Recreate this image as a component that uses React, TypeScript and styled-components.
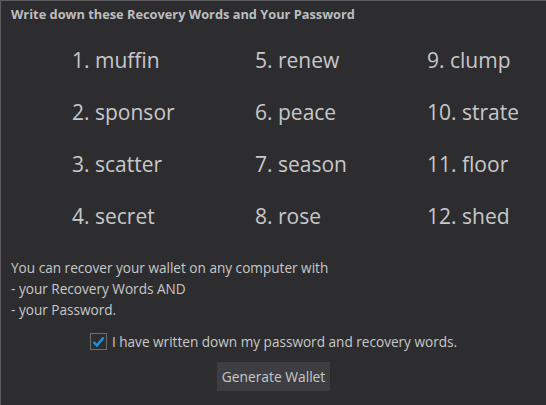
import React from "react";
import styled, { createGlobalStyle } from "styled-components";

const Global = createGlobalStyle`
  html, body {
    margin: 0;
    padding: 0;
    background: #2d2d30;
  }
`;

const Dialog = styled.div`
  box-sizing: border-box;
  width: 546px;
  height: 405px;
  overflow: hidden;
  background: #2d2d30;
  border-top: 1px solid #5c5c5f;
  border-left: 1px solid #5c5c5f;
  font-family: "Open Sans", "DejaVu Sans", sans-serif;
  color: #c8c8c8;
  padding: 3px 10px 0;
`;

const Title = styled.div`
  font-size: 12.8px;
  font-weight: 700;
  line-height: 20px;
  color: #bdbdbd;
`;

const Words = styled.div`
  display: grid;
  grid-template-columns: 183px 172px 91px;
  grid-auto-rows: 52px;
  margin: 10px 0 0 61px;
`;

const Word = styled.div`
  font-size: 21px;
  line-height: 52px;
  white-space: nowrap;
  overflow: hidden;
  color: #c8c8c8;
`;

const Info = styled.p`
  margin: 15px 0 0;
  font-size: 13.6px;
  line-height: 21px;
`;

const CheckRow = styled.label`
  display: flex;
  align-items: center;
  justify-content: center;
  gap: 5px;
  margin-top: 11px;
  height: 20px;
  font-size: 13.6px;
`;

const Box = styled.span`
  box-sizing: border-box;
  width: 17px;
  height: 17px;
  border: 1px solid #6e6e70;
  display: flex;
  align-items: center;
  justify-content: center;
`;

const Actions = styled.div`
  display: flex;
  justify-content: center;
  margin-top: 11px;
`;

const Button = styled.button`
  border: none;
  background: #3e3e42;
  color: #c8c8c8;
  font-family: inherit;
  font-size: 13.8px;
  height: 29px;
  padding: 0 5px;
`;

const words = [
  "muffin", "sponsor", "scatter", "secret",
  "renew", "peace", "season", "rose",
  "clump", "strategy", "floor", "shed",
];

export default function App() {
  const ordered: number[] = [];
  for (let r = 0; r < 4; r++) for (let c = 0; c < 3; c++) ordered.push(c * 4 + r);
  return (
    <>
      <Global />
      <Dialog>
        <Title>Write down these Recovery Words and Your Password</Title>
        <Words>
          {ordered.map((i) => (
            <Word key={i}>
              {i + 1}. {words[i]}
            </Word>
          ))}
        </Words>
        <Info>
          You can recover your wallet on any computer with
          <br />- your Recovery Words AND
          <br />- your Password.
        </Info>
        <CheckRow>
          <Box>
            <svg width="13" height="13" viewBox="0 0 13 13">
              <path d="M1.5 7 L5 10.5 L11.5 2.5" fill="none" stroke="#1f93dc" strokeWidth="2.4" />
            </svg>
          </Box>
          I have written down my password and recovery words.
        </CheckRow>
        <Actions>
          <Button>Generate Wallet</Button>
        </Actions>
      </Dialog>
    </>
  );
}
